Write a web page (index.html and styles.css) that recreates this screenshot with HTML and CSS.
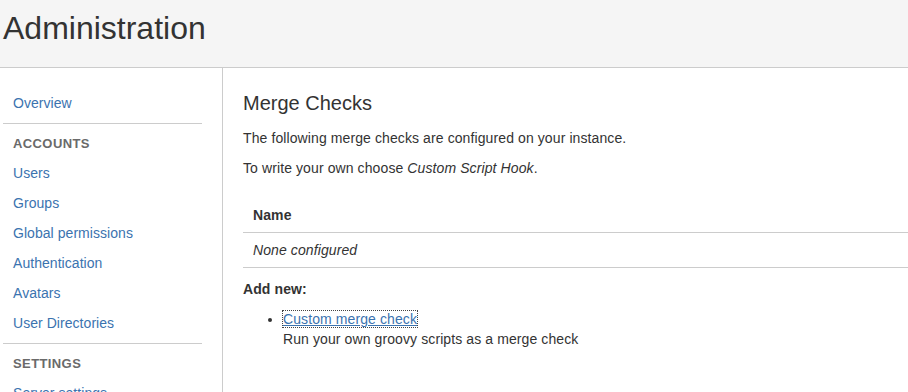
FILE: index.html
```html
<!DOCTYPE html>
<html lang="en">
<head>
<meta charset="utf-8">
<title>Administration</title>
<link rel="stylesheet" href="styles.css">
</head>
<body>
<header class="page-header">
  <h1 class="page-title">Administration</h1>
</header>
<div class="page-body">
  <nav class="sidebar">
    <ul class="nav-group">
      <li><a class="nav-link" href="#">Overview</a></li>
    </ul>
    <div class="nav-section">
      <h4 class="nav-heading">Accounts</h4>
      <ul class="nav-group">
        <li><a class="nav-link" href="#">Users</a></li>
        <li><a class="nav-link" href="#">Groups</a></li>
        <li><a class="nav-link" href="#">Global permissions</a></li>
        <li><a class="nav-link" href="#">Authentication</a></li>
        <li><a class="nav-link" href="#">Avatars</a></li>
        <li><a class="nav-link" href="#">User Directories</a></li>
      </ul>
    </div>
    <div class="nav-section">
      <h4 class="nav-heading">Settings</h4>
      <ul class="nav-group">
        <li><a class="nav-link" href="#">Server settings</a></li>
      </ul>
    </div>
  </nav>
  <main class="content">
    <h2 class="content-title">Merge Checks</h2>
    <p class="text">The following merge checks are configured on your instance.</p>
    <p class="text">To write your own choose <em>Custom Script Hook</em>.</p>
    <table class="checks-table">
      <thead>
        <tr><th class="cell head-cell">Name</th></tr>
      </thead>
      <tbody>
        <tr><td class="cell body-cell"><em>None configured</em></td></tr>
      </tbody>
    </table>
    <p class="text add-new"><strong>Add new:</strong></p>
    <ul class="add-list">
      <li class="add-item">
        <a class="add-link" href="#">Custom merge check</a><br>
        Run your own groovy scripts as a merge check
      </li>
    </ul>
  </main>
</div>
</body>
</html>
```
FILE: styles.css
```css
html, body {
  margin: 0;
  padding: 0;
  background: #ffffff;
}
body {
  font-family: "Liberation Sans", Arial, sans-serif;
  font-size: 14px;
  line-height: 20px;
  color: #333333;
  overflow: hidden;
}
.page-header {
  background: #f5f5f5;
  border-bottom: 1px solid #cccccc;
  height: 68px;
  box-sizing: border-box;
  padding: 8px 3px 0;
}
.page-title {
  margin: 0;
  font-size: 32px;
  line-height: 40px;
  font-weight: normal;
  color: #333333;
}
.page-body {
  display: flex;
  align-items: stretch;
  min-height: 330px;
}
.sidebar {
  width: 223px;
  flex: 0 0 223px;
  box-sizing: border-box;
  border-right: 1px solid #cccccc;
  padding: 20px 20px 0 3px;
}
.nav-group {
  list-style: none;
  margin: 0;
  padding: 0;
}
.nav-link {
  display: block;
  padding: 0 10px;
  line-height: 30px;
  color: #3b73af;
  text-decoration: none;
  white-space: nowrap;
  letter-spacing: 0.05px;
}
.nav-section {
  border-top: 1px solid #cccccc;
  margin-top: 5px;
  padding-top: 10px;
}
.nav-heading {
  margin: 0 0 4px;
  padding: 0 10px;
  font-size: 13px;
  line-height: 20px;
  font-weight: bold;
  text-transform: uppercase;
  letter-spacing: 0.4px;
  color: #6a6a6a;
}
.content {
  flex: 1 1 auto;
  padding: 20px 0 20px 20px;
}
.content-title {
  margin: 0;
  font-size: 20px;
  line-height: 30px;
  font-weight: normal;
  color: #333333;
}
.text {
  margin: 10px 0 0;
  letter-spacing: 0.1px;
}
.checks-table {
  width: 100%;
  border-collapse: collapse;
  margin-top: 20px;
}
.cell {
  text-align: left;
  padding: 7px 10px;
  border-bottom: 1px solid #cccccc;
  letter-spacing: 0.1px;
}
.head-cell {
  font-weight: bold;
}
.add-new {
  margin-top: 11px;
}
.add-list {
  margin: 10px 0 0;
  padding-left: 40px;
  letter-spacing: 0.1px;
}
.add-link {
  color: #3b73af;
  text-decoration: underline;
  outline: 1px dotted #444444;
}
```
